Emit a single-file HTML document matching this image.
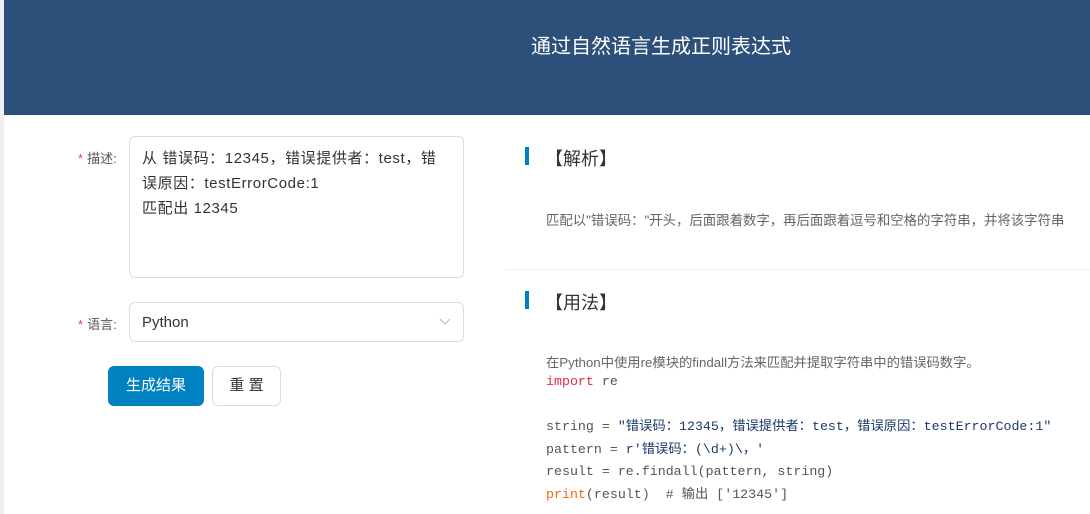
<!DOCTYPE html>
<html><head><meta charset="utf-8"><style>
*{margin:0;padding:0;box-sizing:border-box}
body{width:1090px;height:514px;overflow:hidden;background:#fff;font-family:"Liberation Sans","Noto Sans CJK SC",sans-serif;position:relative}
.strip{position:absolute;left:0;top:0;width:4px;height:514px;background:#efefef}
.hdr{position:absolute;left:4px;top:0;width:1086px;height:115px;background:#2c5079}
.title{position:absolute;left:531px;top:30px;color:#fff;font-size:20px;white-space:nowrap}
.lab{position:absolute;font-size:13px;color:#555}
.lab b{color:#f03c3c;font-weight:normal;margin-right:4px}
.ta{position:absolute;left:129px;top:136px;width:335px;height:142px;border:1px solid #dcdcdc;border-radius:6px;padding:9px 12px;font-size:15px;letter-spacing:0.6px;line-height:25px;color:#333}
.sel{position:absolute;left:129px;top:302px;width:335px;height:40px;border:1px solid #dcdcdc;border-radius:6px;padding:0 12px;font-size:15px;line-height:40px;color:#333}
.btn1{position:absolute;left:108px;top:366px;width:96px;height:40px;background:#0082c0;border-radius:6px;color:#fff;font-size:15px;text-align:center;line-height:40px}
.btn2{position:absolute;left:212px;top:366px;width:69px;height:40px;border:1px solid #dcdcdc;border-radius:6px;color:#333;font-size:15px;text-align:center;line-height:38px}
.bar{position:absolute;left:525px;width:4px;height:18px;background:#0082c0}
.h{position:absolute;left:545px;font-size:18px;color:#333}
.p{position:absolute;left:546px;font-size:13px;color:#666;white-space:nowrap}
.hr{position:absolute;left:506px;top:269px;width:584px;height:1px;background:#eee}
.code{position:absolute;left:546px;font-family:"Liberation Mono","Noto Sans CJK SC",monospace;font-size:13.3px;color:#555;white-space:pre;line-height:22.5px}
.k{color:#e6294f}.o{color:#f06a0a}.s{color:#1b3a6b}
</style></head><body>
<div class="strip"></div>
<div class="hdr"></div>
<div class="title">通过自然语言生成正则表达式</div>
<div class="lab" style="left:78px;top:148px"><b>*</b>描述:</div>
<div class="ta">从 错误码：12345，错误提供者：test，错误原因：testErrorCode:1<br>匹配出 12345</div>
<div class="lab" style="left:78px;top:314px"><b>*</b>语言:</div>
<div class="sel">Python<svg style="position:absolute;right:12px;top:15px" width="12" height="8" viewBox="0 0 12 8"><path d="M1 1l5 5 5-5" stroke="#bbb" fill="none"/></svg></div>
<div class="btn1">生成结果</div>
<div class="btn2">重 置</div>
<div class="bar" style="top:147px"></div>
<div class="h" style="top:145px">【解析】</div>
<div class="p" style="top:209px;font-size:13.4px">匹配以"错误码："开头，后面跟着数字，再后面跟着逗号和空格的字符串，并将该字符串</div>
<div class="hr"></div>
<div class="bar" style="top:291px"></div>
<div class="h" style="top:289px">【用法】</div>
<div class="p" style="top:352px;font-size:13.3px">在Python中使用re模块的findall方法来匹配并提取字符串中的错误码数字。</div>
<div class="code" style="top:371px"><span class="k">import</span> re

string = <span class="s">"错误码：12345，错误提供者：test，错误原因：testErrorCode:1"</span>
pattern = <span class="s">r'错误码：(\d+)\，'</span>
result = re.findall(pattern, string)
<span class="o">print</span>(result)  # 输出 ['12345']</div>
</body></html>
